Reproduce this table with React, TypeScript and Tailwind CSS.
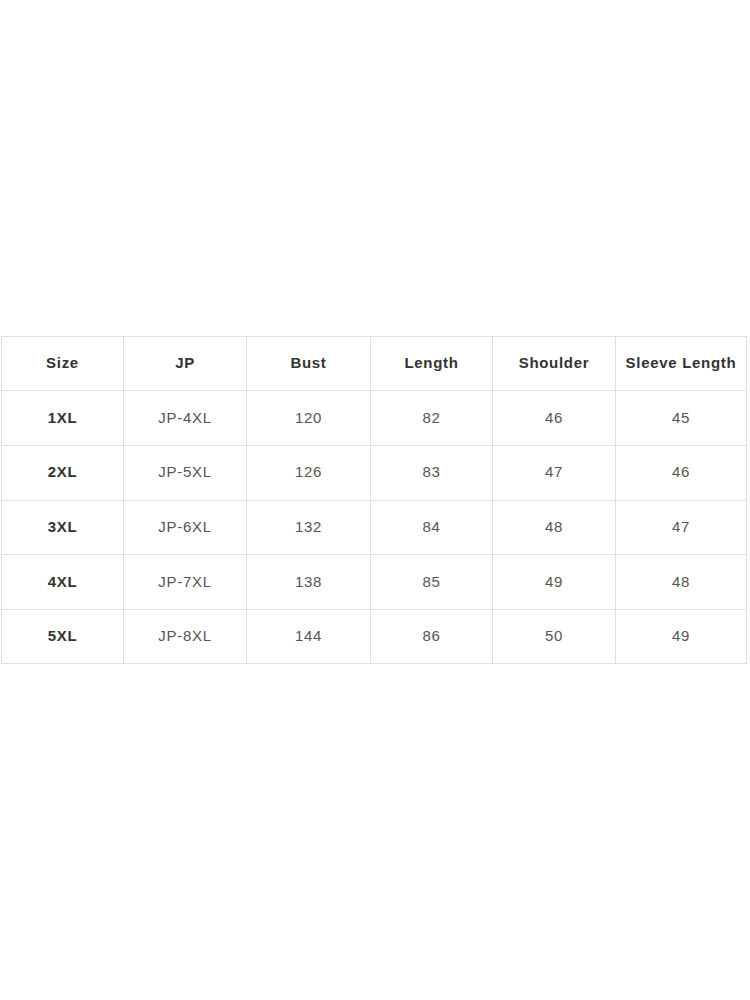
const HEADERS = ["Size", "JP", "Bust", "Length", "Shoulder", "Sleeve Length"];

const ROWS = [
  ["1XL", "JP-4XL", "120", "82", "46", "45"],
  ["2XL", "JP-5XL", "126", "83", "47", "46"],
  ["3XL", "JP-6XL", "132", "84", "48", "47"],
  ["4XL", "JP-7XL", "138", "85", "49", "48"],
  ["5XL", "JP-8XL", "144", "86", "50", "49"],
];

export default function App() {
  return (
    <div className="flex h-[1000px] w-[750px] items-center bg-white font-['Liberation_Sans',Arial,sans-serif]">
      <div className="ml-px grid grid-cols-[122px_123px_124px_122px_123px_131px] border-l border-t border-[#e0e0e0] text-[15px] tracking-[0.7px]">
        {HEADERS.map((h) => (
          <div
            key={h}
            className="flex h-[54.67px] items-center justify-center border-b border-r border-[#e0e0e0] font-bold text-[#333]"
          >
            {h}
          </div>
        ))}
        {ROWS.map((row) =>
          row.map((cell, i) => (
            <div
              key={row[0] + i}
              className={
                i === 0
                  ? "flex h-[54.67px] items-center justify-center border-b border-r border-[#e0e0e0] font-bold text-[#333]"
                  : "flex h-[54.67px] items-center justify-center border-b border-r border-[#e0e0e0] text-[#555]"
              }
            >
              {cell}
            </div>
          ))
        )}
      </div>
    </div>
  );
}
